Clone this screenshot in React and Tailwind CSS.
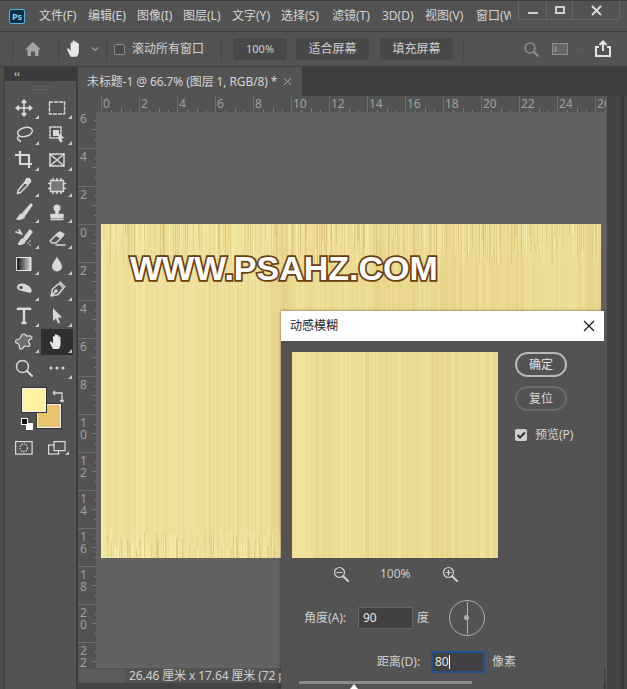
import React from "react";

const sans = "[font-family:'Noto_Sans','Noto_Sans_CJK_SC',sans-serif]";

function rng(seed) {
  let s = seed;
  return () => {
    s = (s * 1664525 + 1013904223) % 4294967296;
    return s / 4294967296;
  };
}

function Gold({ w, h, seed, fade }) {
  const r = rng(seed);
  const bands = [];
  for (let x = 0; x < w; ) {
    const bw = 6 + r() * 40;
    bands.push(<rect key={"b" + x} x={x} y={0} width={bw} height={h} fill={r() < 0.55 ? "#f6eca8" : "#dfca7e"} opacity={0.06 + r() * 0.14} />);
    x += bw;
  }
  const lines = [];
  for (let i = 0; i < w * 1.2; i++) {
    lines.push(
      <rect key={i} x={Math.floor(r() * w)} y={0} width={1 + Math.floor(r() * 2)} height={h} fill={r() < 0.55 ? "#faf2b4" : "#dac47a"} opacity={0.04 + r() * 0.12} />
    );
  }
  const edge = [];
  if (fade) {
    for (let i = 0; i < w * 0.9; i++) {
      const x = Math.floor(r() * w);
      const l = 10 + r() * 36;
      edge.push(<rect key={"t" + i} x={x} y={0} width={1} height={l} fill={r() < 0.6 ? "#f8f0b0" : "#cfb66a"} opacity={0.2 + r() * 0.35} />);
      const x2 = Math.floor(r() * w);
      const l2 = 6 + r() * 22;
      edge.push(<rect key={"e" + i} x={x2} y={h - l2} width={1} height={l2} fill={r() < 0.65 ? "#faf3b8" : "#cfb66a"} opacity={0.2 + r() * 0.35} />);
    }
  }
  const fid = "soft" + seed;
  return (
    <svg width={w} height={h} className="block">
      <defs>
        <linearGradient id={"lg" + seed}>
          <stop offset="0" stopColor="#f0e29a" />
          <stop offset="0.45" stopColor="#ead88e" />
          <stop offset="1" stopColor="#ebda90" />
        </linearGradient>
        <filter id={fid} x="0" y="0" width="100%" height="100%">
          <feGaussianBlur stdDeviation="0.6 0.5" />
        </filter>
      </defs>
      <rect width={w} height={h} fill={`url(#lg${seed})`} />
      <g filter={`url(#${fid})`}>
        {bands}
        {lines}
        {edge}
      </g>
    </svg>
  );
}

const Corner = () => <span className="absolute right-[1px] bottom-[2px] w-0 h-0 border-l-[4px] border-l-transparent border-b-[4px] border-b-[#c8c8c8]" />;

const S = ({ children, sel, corner = true }) => (
  <div className={`relative w-[32px] h-[26px] flex items-center justify-center ${sel ? "bg-[#2f2f2f]" : ""}`}>
    <svg width="20" height="20" viewBox="0 0 20 20" fill="none" stroke="#d8d8d8" strokeWidth="1.5" strokeLinecap="round" strokeLinejoin="round">{children}</svg>
    {corner && <Corner />}
  </div>
);

const hand = "M6 17 3 11c-.6-1.2.8-2 1.6-1L6 11.5V5c0-1.3 1.7-1.3 1.8 0V3.2c0-1.3 1.9-1.3 2 0v.8c0-1.2 1.9-1.2 1.9 0v1.3c0-1.2 1.800-1.100 1.800.2V12c0 2.500-1 4-2 5z";

const tools = [
  [<><path d="M10 2v16M2 10h16M10 2 8 4.500h4zM10 18l-2-2.500h4zM2 10l2.500-2v4zM18 10l-2.500-2v4z" fill="#d8d8d8" /></>,
   <><rect x="2.500" y="4" width="15" height="12" strokeDasharray="3 2" /></>],
  [<><ellipse cx="11" cy="8" rx="7.500" ry="4.500" transform="rotate(-15 11 8)" /><path d="M5 12c-1.500 1-2 2.500-1 3.500s2 .5 2.500 2" /></>,
   <><rect x="3" y="3" width="11" height="11" strokeDasharray="2 1.500" /><rect x="6" y="6" width="6" height="6" fill="#d8d8d8" stroke="none" /><path d="m11 9 6.500 5-3 .5 1 3.500-2 .5-2-3z" fill="#d8d8d8" stroke="none" /></>],
  [<><path d="M6 1v13h12M1 5h14v13" strokeWidth="2.200" strokeLinecap="butt" /></>,
   <><rect x="3" y="4" width="14" height="12" /><path d="m3 4 14 12M17 4 3 16" /></>],
  [<><path d="m11 6 3 3-7.500 7.500-3 1 .8-3.200z" /><path d="M12 3.500c1-1.500 3-1.500 4 0s.5 2.800-1 4l-3.500-1z" fill="#d8d8d8" /></>,
   <><rect x="3.500" y="4.500" width="13" height="11" fill="#777" strokeDasharray="2 1" /><path d="M6 2.500v2M10 2.500v2M14 2.500v2M6 15.500v2M10 15.500v2M14 15.500v2M1.500 7.500h2M1.500 12.500h2M16.500 7.500h2M16.500 12.500h2" /></>],
  [<><path d="M17 2 9 11l2 2 7-10z" fill="#d8d8d8" /><path d="M8 12c-3 0-2.500 3-5 5 3 .5 7-.5 7.500-3z" fill="#d8d8d8" /></>,
   <><circle cx="10" cy="6" r="3.500" fill="#d8d8d8" stroke="none" /><path d="M9 9h2v3H9z" fill="#d8d8d8" /><path d="M4 12.500h12v3H4zM4 17.500h12" fill="#d8d8d8" /></>],
  [<><path d="M16 2 10 10l2 2 6-8z" fill="#d8d8d8" /><path d="M9 11c-3 0-2.500 3-4.500 5 3 .5 6-.5 6.500-3z" fill="#d8d8d8" /><path d="M2 4l6 2M5 2l2 3" strokeWidth="1.800" /><path d="M14 15h.1M16 13h.1M16 17h.1" /></>,
   <><path d="m3 13 8-8 5 3-7 7H5z" /><path d="m8 7.500 5-4.500 5 3-4.500 4.500z" fill="#d8d8d8" stroke="none" /><path d="M9 17h9" /></>],
  [<><defs><linearGradient id="g1"><stop offset="0" stopColor="#111" /><stop offset="1" stopColor="#ddd" /></linearGradient></defs><rect x="3" y="3.500" width="14" height="13" fill="url(#g1)" stroke="#e8e8e8" strokeWidth="1" /></>,
   <><path d="M10 2.500c1 3 5 6.500 5 10a5 5 0 0 1-10 0c0-3.500 4-7 5-10z" fill="#d8d8d8" stroke="none" /></>],
  [<><path d="M3 6c2-3 6-3 10-1s5 4 4.500 7c-1 1-3 1-5 0-2.500-1-7-1-9-3z" fill="#d8d8d8" stroke="none" /><circle cx="7" cy="7.500" r="1.800" fill="#555" stroke="none" /></>,
   <><path d="m4 16 1.500-7L12 3.500l4.500 4.500-5.500 6.500zM4 16l4.500-4.500" /><circle cx="9" cy="11" r="1" /><path d="m13 2 5 5" /></>],
  [<><path d="M4 4V2.800h12V4M10 3v14M7.500 17h5" strokeWidth="2.400" strokeLinecap="butt" /></>,
   <><path d="m6 2 9 9.500-4 .3 2 5-2 .7-2-5-3 2.500z" fill="#d8d8d8" stroke="none" /></>],
];

function StampIcon() {
  return <path d="M9 2c1.800-.8 2.500 1 3.500 2 1.500 0 5.500-.5 5.500 1.500 0 1.500-3.500 2-3.500 3.500 0 2 2.500 3 1 5-1.500 1.500-3-.5-4.500 0-1.500.5-2.500 3.500-4.500 3-2-.8-.5-3-1.500-4.500C4 11 1 11 1.500 9c.5-2 3.500-1 4.500-2.500.8-1.500 1-3.500 3-4.500z" fill="#6e6e6e" strokeWidth="1.300" strokeDasharray="2 .8" />;
}

function Toolbar() {
  return (
    <div className="w-[72px] shrink-0 bg-[#535353] border-l border-[#3e3e3e]">
      <div className="h-[14px] bg-[#3b3b3b] flex items-center pl-[9px] text-[9px] leading-none text-[#d0d0d0] font-bold [font-family:'Liberation_Sans',sans-serif]">‹‹</div>
      <div className="h-[14px] flex items-center justify-center"><div className="w-[20px] h-[4px] border-y border-dotted border-[#6a6a6a]" /></div>
      <div className="flex flex-col pl-[3px]">
        {tools.map((row, i) => (
          <div key={i} className="flex gap-px">
            <S>{row[0]}</S>
            <S>{row[1]}</S>
          </div>
        ))}
        <div className="flex gap-px">
          <S><StampIcon /></S>
          <S sel><path d={hand} fill="#e8e8e8" stroke="none" /></S>
        </div>
        <div className="flex gap-px">
          <S corner={false}><circle cx="8.500" cy="8.500" r="6" /><path d="m13 13 5 5" strokeWidth="2" /></S>
          <S><circle cx="4" cy="10" r="1.500" fill="#d8d8d8" stroke="none" /><circle cx="10" cy="10" r="1.500" fill="#d8d8d8" stroke="none" /><circle cx="16" cy="10" r="1.500" fill="#d8d8d8" stroke="none" /></S>
        </div>
      </div>
      <div className="relative h-[60px] mt-[7px]">
        <div className="absolute left-[17px] top-[0px] w-[24px] h-[24px] bg-[#fdf2a2] border border-[#f4f4f4] z-10 outline outline-[#333]" />
        <div className="absolute left-[32px] top-[16px] w-[24px] h-[24px] bg-[#eac36f] border border-[#f4f4f4] outline outline-[#333]" />
        <svg className="absolute left-[47px] top-[1px]" width="14" height="14" viewBox="0 0 14 14" fill="none" stroke="#d8d8d8" strokeWidth="1.300"><path d="M2 4h8v8M1 4l2-2M1 4l2 2M10 13l-2-2M10 13l2-2" /></svg>
        <div className="absolute left-[16px] top-[30px] w-[7px] h-[7px] bg-[#111] border border-white z-10" />
        <div className="absolute left-[21px] top-[35px] w-[7px] h-[7px] bg-white" />
      </div>
      <div className="flex pl-[10px] mt-[-7px]">
        <svg width="18" height="14" viewBox="0 0 18 14" fill="none" stroke="#dcdcdc" strokeWidth="1.200"><rect x=".6" y=".6" width="16.500" height="12.500" /><circle cx="8.800" cy="6.800" r="3.800" strokeDasharray="1.500 1" /></svg>
        <div className="relative w-[22px] h-[16px] ml-[15px]">
          <svg width="18" height="14" viewBox="0 0 18 14" fill="none" stroke="#dcdcdc" strokeWidth="1.200"><rect x=".6" y="4" width="10" height="9" /><rect x="6" y=".6" width="11" height="9" fill="#535353" /></svg>
          <Corner />
        </div>
      </div>
    </div>
  );
}

function HRuler() {
  const labels = [0, 2, 4, 6, 8, 10, 12, 14, 16, 18, 20, 22, 24, 26];
  return (
    <div className="h-[16px] flex bg-[#535353] overflow-hidden pl-[23px]">
      {labels.map((n) => (
        <div key={n} className="relative w-[38px] shrink-0 h-full border-l border-[#6c6c6c] pl-[1px] text-[12px] leading-[15px] text-[#a0a0a0]">
          {n}
          <span className="absolute bottom-0 left-[19px] w-px h-[4px] bg-[#777]" />
          <span className="absolute bottom-0 left-[9px] w-px h-[2px] bg-[#777]" />
          <span className="absolute bottom-0 left-[28px] w-px h-[2px] bg-[#777]" />
        </div>
      ))}
    </div>
  );
}

function VRuler() {
  const labels = ["6", "4", "2", "0", "2", "4", "6", "8", "10", "12", "14", "16", "18", "20", "22"];
  return (
    <div className="w-[18px] shrink-0 bg-[#535353] overflow-hidden">
      <div className="flex flex-col mt-[-2px]">
        {labels.map((n, i) => (
          <div key={i} className="relative h-[38px] shrink-0 border-t border-[#6c6c6c] pl-[2px] pt-[2px] text-[12px] text-[#a0a0a0] flex flex-col">
            {n.split("").map((c, j) => <span key={j} className="h-[12px] leading-[12px]">{c}</span>)}
            <span className="absolute right-0 top-[18px] h-px w-[4px] bg-[#777]" />
            <span className="absolute right-0 top-[9px] h-px w-[2px] bg-[#777]" />
            <span className="absolute right-0 top-[28px] h-px w-[2px] bg-[#777]" />
          </div>
        ))}
      </div>
    </div>
  );
}

const Mag = ({ plus }) => (
  <svg width="16" height="16" viewBox="0 0 16 16" fill="none" stroke="#d0d0d0" strokeWidth="1.200" strokeLinecap="round">
    <circle cx="6.500" cy="6.500" r="5" />
    <path d="m10.500 10.500 4.500 4.500" strokeWidth="2" />
    <path d={plus ? "M4 6.500h5M6.500 4v5" : "M4 6.500h5"} />
  </svg>
);

function Dialog() {
  return (
    <div className="absolute left-[281px] top-[311px] w-[323px] h-[378px] bg-[#535353] overflow-hidden shadow-[0_0_3px_rgba(0,0,0,0.5)]">
      <div className="h-[30px] bg-white flex items-center justify-between pl-[9px] pr-[9px] text-[12px] text-[#222]">
        <span>动感模糊</span>
        <svg width="12" height="12" viewBox="0 0 12 12" stroke="#111" strokeWidth="1.100"><path d="m1 1 10 10M11 1 1 11" /></svg>
      </div>
      <div className="flex pl-[11px] pt-[11px]">
        <div className="w-[206px] h-[206px] overflow-hidden shrink-0"><Gold w={206} h={206} seed={77} /></div>
        <div className="ml-[17px] flex flex-col items-start">
          <div className="w-[52px] h-[25px] rounded-full border-2 border-[#b8b8b8] flex items-center justify-center text-[12px] text-[#e4e4e4]">确定</div>
          <div className="mt-[9px] w-[52px] h-[25px] rounded-full border-2 border-[#6a6a6a] flex items-center justify-center text-[12px] text-[#d8d8d8]">复位</div>
          <div className="mt-[16px] flex items-center gap-[8px] text-[12px] text-[#d4d4d4] leading-[16px]">
            <div className="w-[12px] h-[12px] rounded-[2px] bg-[#d0d0d0] flex items-center justify-center">
              <svg width="10" height="10" viewBox="0 0 10 10" fill="none" stroke="#333" strokeWidth="2"><path d="m1.500 5 2.500 2.500 5-5" /></svg>
            </div>
            <span>预览(P)</span>
          </div>
        </div>
      </div>
      <div className="flex items-center w-[217px] pl-[52px] h-[16px] mt-[8px] gap-[31px] text-[12px] text-[#c8c8c8]">
        <Mag />
        <span>100%</span>
        <Mag plus />
      </div>
      <div className="flex items-center mt-[18px] pl-[23px] h-[36px] text-[12px] text-[#d0d0d0]">
        <span className="w-[54px]">角度(A):</span>
        <div className="w-[55px] h-[22px] bg-[#414141] border border-[#646464] flex items-center pl-[4px] text-[#e8e8e8]">90</div>
        <span className="ml-[4px]">度</span>
        <div className="relative ml-[20px] w-[36px] h-[36px] rounded-full border border-[#b0b0b0] flex items-center justify-center">
          <div className="w-px h-[32px] bg-[#b0b0b0]" />
          <div className="absolute left-[14px] top-[14px] w-[5px] h-[5px] rounded-full bg-[#b0b0b0]" />
        </div>
      </div>
      <div className="flex items-center mt-[15px] pl-[96px] h-[22px] text-[12px] text-[#d0d0d0]">
        <span className="w-[54px]">距离(D):</span>
        <div className="w-[54px] h-[22px] bg-[#414141] border-2 border-[#23518f] flex items-center pl-[2px] text-[#e8e8e8]">80<span className="w-px h-[14px] bg-white" /></div>
        <span className="ml-[7px]">像素</span>
      </div>
      <div className="relative mt-[8px] ml-[18px] w-[173px] h-[3px] bg-[#8a8a8a]">
        <div className="absolute left-[51px] top-[3px] w-0 h-0 border-x-[4px] border-x-transparent border-b-[5px] border-b-white" />
      </div>
    </div>
  );
}

const Sep = ({ ml }) => <div className={`${ml} w-[1px] h-[24px] bg-[#474747]`} />;

export default function App() {
  const menus = [
    ["文件(F)", "w-[49px]"],
    ["编辑(E)", "w-[49px]"],
    ["图像(I)", "w-[46px]"],
    ["图层(L)", "w-[49px]"],
    ["文字(Y)", "w-[49px]"],
    ["选择(S)", "w-[51px]"],
    ["滤镜(T)", "w-[50px]"],
    ["3D(D)", "w-[43px]"],
    ["视图(V)", "w-[51px]"],
  ];
  return (
    <div className={`relative w-[627px] h-[689px] bg-[#3d3d3d] overflow-hidden flex flex-col ${sans}`}>
      <div className="h-[31px] bg-[#535353] flex items-center shrink-0 border-t border-[#3c3c3c]">
        <div className="ml-[9px] w-[16px] h-[15px] bg-[#0e2d3f] border border-[#4cb5e0] rounded-[2px] flex items-center justify-center text-[9px] leading-none font-bold text-[#7fd0f5]">Ps</div>
        <div className="ml-[14px] flex items-center text-[12px] text-[#d4d4d4] whitespace-nowrap">
          {menus.map(([m, w]) => <span key={m} className={`${w} leading-[16px]`}>{m}</span>)}
          <span className="w-[35px] overflow-hidden">窗口(W)</span>
        </div>
        <div className="ml-auto self-start flex h-[19px] mr-[7px] border border-t-0 border-[#666] rounded-b-[3px]">
          <div className="w-[28px] flex items-center justify-center border-r border-[#666]"><span className="w-[10px] h-[2px] bg-[#d0d0d0] mt-[5px]" /></div>
          <div className="w-[26px] flex items-center justify-center border-r border-[#666]"><span className="w-[10px] h-[8px] border-2 border-[#d0d0d0]" /></div>
          <div className="w-[46px] flex items-center justify-center"><svg width="11" height="11" viewBox="0 0 11 11" stroke="#d8d8d8" strokeWidth="2"><path d="m1 1 9 9M10 1l-9 9" /></svg></div>
        </div>
      </div>

      <div className="h-[36px] shrink-0 bg-[#535353] border-y border-[#3f3f3f] flex items-center text-[12px] text-[#d0d0d0]">
        <Sep ml="ml-[12px]" />
        <svg className="ml-[11px]" width="18" height="16" viewBox="0 0 18 16" fill="#a4a4a4"><path d="M9 1 1 8.500h2.500V15H7v-4.500h4V15h3.500V8.500H17z" /></svg>
        <Sep ml="ml-[16px]" />
        <svg className="ml-[5px]" width="22" height="22" viewBox="0 0 20 20"><path d={hand} fill="#e8e8e8" /></svg>
        <svg className="ml-[4px]" width="10" height="10" viewBox="0 0 10 10" fill="none" stroke="#9c9c9c" strokeWidth="1.200"><path d="m2 3.500 3 3 3-3" /></svg>
        <Sep ml="ml-[6px]" />
        <div className="ml-[7px] w-[11px] h-[11px] rounded-[2px] border border-[#8c8c8c] bg-[#4a4a4a]" />
        <span className="ml-[7px] whitespace-nowrap">滚动所有窗口</span>
        <Sep ml="ml-[17px]" />
        <div className="ml-[11px] w-[54px] h-[22px] bg-[#484848] rounded-[3px] flex items-center justify-center text-[11px]">100%</div>
        <div className="ml-[9px] w-[73px] h-[22px] bg-[#484848] rounded-[3px] flex items-center justify-center">适合屏幕</div>
        <div className="ml-[11px] w-[73px] h-[22px] bg-[#484848] rounded-[3px] flex items-center justify-center">填充屏幕</div>
        <Sep ml="ml-[10px]" />
        <svg className="ml-[59px]" width="17" height="17" viewBox="0 0 17 17" fill="none" stroke="#8e8e8e" strokeWidth="1.600"><circle cx="7" cy="7" r="5" /><path d="m10.500 10.500 5 5" strokeWidth="2" /></svg>
        <svg className="ml-[12px]" width="17" height="14" viewBox="0 0 17 14" fill="none" stroke="#8e8e8e"><rect x=".5" y="1.500" width="15" height="11" fill="#666" /><rect x="2.500" y="4" width="2" height="6" fill="#8e8e8e" stroke="none" /></svg>
        <svg className="ml-[6px]" width="8" height="8" viewBox="0 0 8 8" fill="none" stroke="#676767"><path d="m1 3 3 3 3-3" /></svg>
        <svg className="ml-[11px]" width="18" height="18" viewBox="0 0 18 18" fill="none" stroke="#e4e4e4" strokeWidth="2"><path d="M5 7H2v9h14V7h-3M9 11V2M5.500 5 9 1.500 12.500 5" /></svg>
      </div>

      <div className="flex-1 flex min-h-0">
        <div className="w-[4px] bg-[#4c4c4c] shrink-0" />
        <Toolbar />
        <div className="w-[2px] shrink-0" />
        <div className="flex-1 flex flex-col min-w-0">
          <div className="h-[29px] shrink-0 bg-[#3d3d3d] flex">
            <div className="w-[224px] bg-[#535353] flex items-center pl-[9px] text-[12px] tracking-[-0.1px] text-[#d4d4d4] whitespace-nowrap">
              未标题-1 @ 66.7% (图层 1, RGB/8) *
              <svg className="ml-[6px]" width="9" height="9" viewBox="0 0 9 9" stroke="#a8a8a8"><path d="m1 1 7 7M8 1 1 8" /></svg>
            </div>
          </div>
          <div className="flex flex-1 min-h-0">
            <div className="w-[528px] shrink-0 flex flex-col bg-[#535353]">
              <HRuler />
              <div className="flex h-[556px] shrink-0">
                <VRuler />
                <div className="w-[510px] bg-[#626262] pt-[112px] pl-[5px] overflow-hidden">
                  <div className="relative w-[500px] h-[334px]">
                    <Gold w={500} h={334} seed={12345} fade />
                    <div className="absolute left-[29px] top-[22px] font-bold text-[34px] leading-[44px] text-white whitespace-nowrap [font-family:'Liberation_Sans',sans-serif] [-webkit-text-stroke:3.500px_#6a3d12] [paint-order:stroke_fill]">WWW.PSAHZ.COM</div>
                  </div>
                </div>
              </div>
              <div className="h-[15px] shrink-0 flex items-center text-[12px] tracking-[-0.1px] text-[#d0d0d0] whitespace-nowrap overflow-hidden">
                <div className="ml-px w-[46px] h-[13px] bg-[#5c5c5c] mr-[4px] shrink-0" />
                26.46 厘米 x 17.64 厘米 (72 p
              </div>
              <div className="flex-1 bg-[#444]" />
            </div>
            <div className="flex-1 flex bg-[#434343] border-l border-[#5a5a5a]">
              <div className="w-[14px]" />
              <div className="w-[3px] bg-[#383838]" />
              <div className="flex-1 bg-[#484848]" />
            </div>
          </div>
        </div>
      </div>
      <Dialog />
    </div>
  );
}
